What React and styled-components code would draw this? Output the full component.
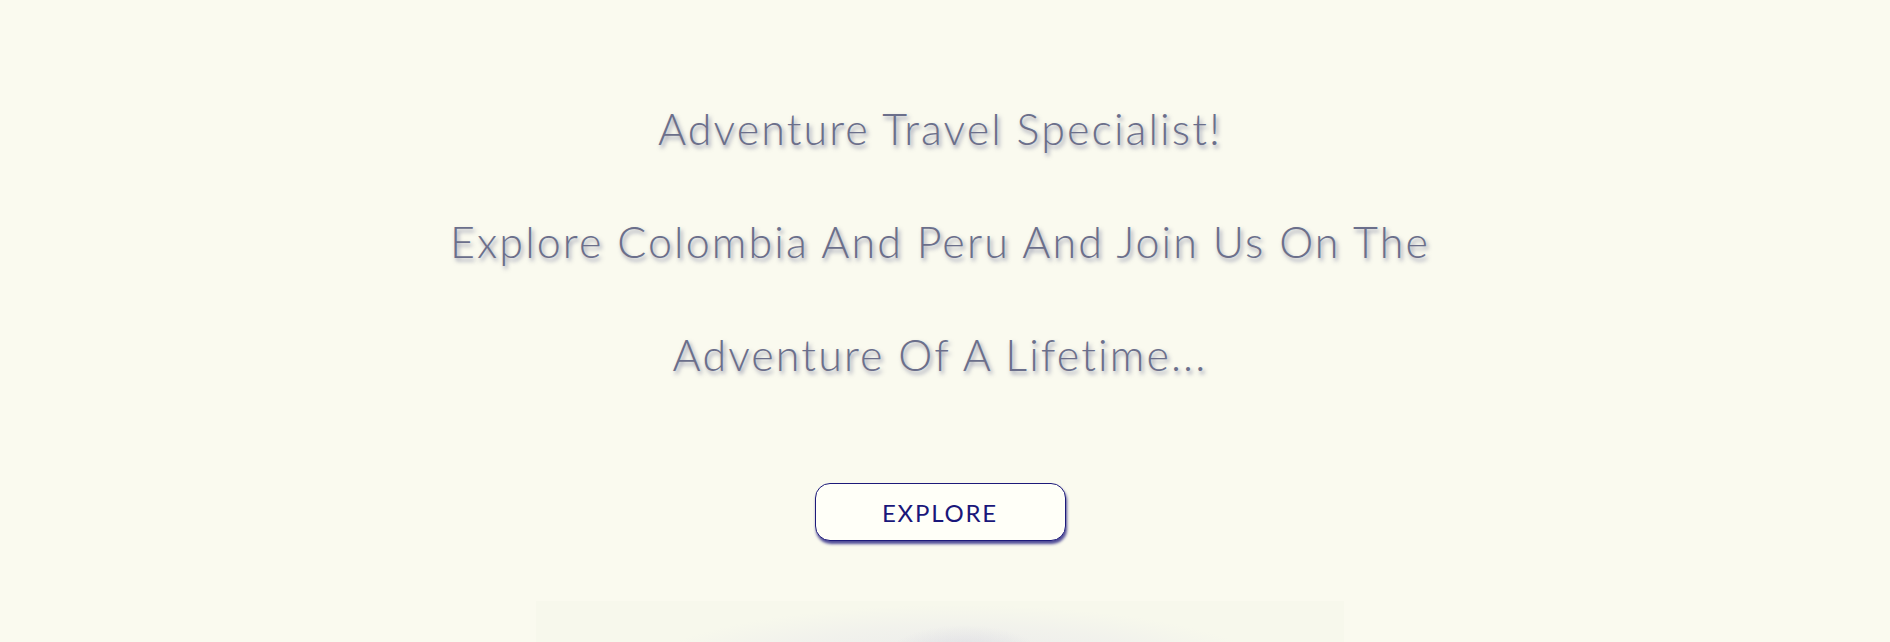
import React from "react";
import styled, { createGlobalStyle } from "styled-components";

const GlobalStyle = createGlobalStyle`
  html, body {
    margin: 0;
    padding: 0;
    background: #fafaef;
  }
  body {
    font-family: Lato, "Open Sans", sans-serif;
  }
`;

const Hero = styled.section`
  display: flex;
  flex-direction: column;
  align-items: center;
  height: 642px;
  padding: 72px 10px 0 0;
  box-sizing: border-box;
  overflow: hidden;
`;

const Tagline = styled.h1`
  flex-shrink: 0;
  margin: 0;
  font-family: Lato, sans-serif;
  font-weight: 300;
  font-size: 43px;
  line-height: 113px;
  letter-spacing: 2.1px;
  font-variant-ligatures: none;
  text-align: center;
  color: #6b6f8b;
  text-shadow: 2px 3px 4px rgba(50, 55, 110, 0.5);
`;

const ExploreButton = styled.button`
  flex-shrink: 0;
  margin-top: 72px;
  width: 251px;
  height: 58px;
  padding: 0;
  background: #fffff8;
  border: 1.5px solid #1d1a7a;
  border-radius: 15px;
  box-shadow: 1px 3px 3px rgba(20, 15, 120, 0.75);
  font-family: Lato, sans-serif;
  font-size: 24px;
  font-weight: 400;
  letter-spacing: 1.8px;
  color: #1a177a;
  cursor: pointer;
`;

const Backdrop = styled.div`
  flex-shrink: 0;
  margin-top: 60px;
  width: 808px;
  height: 120px;
  background:
    radial-gradient(ellipse 80px 34px at 53% 58px, rgba(218, 218, 226, 0.95), rgba(218, 218, 226, 0) 100%),
    radial-gradient(ellipse 320px 70px at 52% 74px, rgba(232, 232, 234, 1), rgba(238, 238, 236, 0.6) 70%, rgba(247, 248, 236, 0) 100%),
    #f7f8ec;
`;

const App = () => {
  return (
    <>
      <GlobalStyle />
      <Hero>
        <Tagline>
          Adventure Travel Specialist!
          <br />
          Explore Colombia And Peru And Join Us On The
          <br />
          Adventure Of A Lifetime...
        </Tagline>
        <ExploreButton type="button">EXPLORE</ExploreButton>
        <Backdrop />
      </Hero>
    </>
  );
};

export default App;
